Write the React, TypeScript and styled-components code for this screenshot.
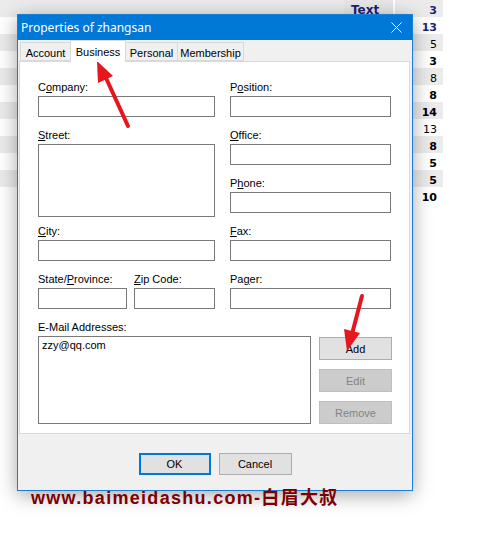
import React from "react";
import styled, { createGlobalStyle } from "styled-components";

const Global = createGlobalStyle`
  html, body { margin: 0; padding: 0; background: #ffffff; }
  body { font-family: "Liberation Sans", Arial, sans-serif; }
  * { box-sizing: border-box; }
`;

const Stage = styled.div`
  position: relative;
  width: 477px;
  height: 535px;
  overflow: hidden;
  background: #ffffff;
`;

/* ---------- background table ---------- */
const Table = styled.div`
  display: flex;
  flex-direction: column;
  width: 443px;
`;

const Row = styled.div<{ $shade: boolean }>`
  display: flex;
  height: 17px;
  background: ${(p) => (p.$shade ? "#ebebeb" : "#ffffff")};
`;

const Lead = styled.div`
  flex: 1;
`;

const TextCell = styled.div<{ $head?: boolean }>`
  width: 49px;
  padding: 3px 0 0 7px;
  font-family: "DejaVu Sans", Verdana, sans-serif;
  font-weight: bold;
  font-size: 12px;
  line-height: 14px;
  color: #1f1f7a;
  background: ${(p) => (p.$head ? "#e6e6e6" : "transparent")};
`;

const Sep = styled.div`
  width: 2px;
  background: #ffffff;
`;

const NumCell = styled.div<{ $bold: boolean; $navy: boolean }>`
  width: 48px;
  padding: 4px 6px 0 0;
  text-align: right;
  font-family: "DejaVu Sans", Verdana, sans-serif;
  font-size: 11px;
  line-height: 13px;
  font-weight: ${(p) => (p.$bold ? "bold" : "normal")};
  color: ${(p) => (p.$navy ? "#1f1f7a" : "#000000")};
`;

/* ---------- dialog ---------- */
const Dialog = styled.div`
  position: absolute;
  left: 17px;
  top: 14px;
  width: 396px;
  height: 477px;
  display: flex;
  flex-direction: column;
  border: 1px solid #1a7fd4;
  background: #f0f0f0;
  box-shadow: 0 4px 18px rgba(0, 0, 0, 0.35);
`;

const TitleBar = styled.div`
  height: 25px;
  flex: none;
  display: flex;
  align-items: center;
  justify-content: space-between;
  padding: 0 10px 1px 3px;
  background: #0078d7;
  color: #ffffff;
  font-family: "Noto Sans", "Liberation Sans", sans-serif;
  font-size: 12px;
`;

const CloseIcon = styled.svg`
  display: block;
`;

const TabStrip = styled.div`
  height: 21px;
  flex: none;
  display: flex;
  align-items: flex-end;
  padding-left: 2px;
  position: relative;
  z-index: 1;
`;

const Tab = styled.div<{ $active?: boolean; $w: number }>`
  width: ${(p) => p.$w}px;
  height: ${(p) => (p.$active ? 22 : 19)}px;
  margin-bottom: ${(p) => (p.$active ? -1 : 0)}px;
  display: flex;
  align-items: center;
  justify-content: center;
  padding-top: ${(p) => (p.$active ? 0 : 2)}px;
  border: 1px solid #d9d9d9;
  border-bottom: ${(p) => (p.$active ? "none" : "1px solid #d9d9d9")};
  margin-right: -1px;
  background: ${(p) => (p.$active ? "#ffffff" : "#f0f0f0")};
  font-size: 11px;
  color: #000;
  position: relative;
  z-index: ${(p) => (p.$active ? 2 : 1)};
`;

const Panel = styled.div`
  height: 373px;
  flex: none;
  margin: 0 2px 0 1px;
  border: 1px solid #d9d9d9;
  background: #ffffff;
  padding: 17px 0 0 18px;
  display: flex;
  flex-direction: column;
  gap: 10px;
`;

const FormGrid = styled.div`
  display: grid;
  grid-template-columns: 177px 161px;
  grid-template-rows: repeat(5, 38px);
  column-gap: 15px;
  row-gap: 10px;
`;

const Field = styled.div<{ $col?: number; $row?: string }>`
  display: flex;
  flex-direction: column;
  align-self: start;
  grid-column: ${(p) => p.$col ?? "auto"};
  grid-row: ${(p) => p.$row ?? "auto"};
`;

const Label = styled.div`
  height: 16px;
  margin-bottom: 1px;
  font-size: 11px;
  line-height: 16px;
  color: #000;
  white-space: nowrap;
`;

const U = styled.span`
  text-decoration: underline;
`;

const TextBox = styled.input<{ $w?: number }>`
  display: block;
  width: ${(p) => (p.$w ? `${p.$w}px` : "100%")};
  height: 21px;
  margin: 0;
  padding: 0 3px;
  border: 1px solid #7a7a7a;
  background: #fff;
  font-family: "Liberation Sans", Arial, sans-serif;
  font-size: 11px;
  outline: none;
`;

const TextArea = styled.textarea`
  display: block;
  width: 100%;
  height: 73px;
  margin: 0;
  padding: 2px 3px;
  border: 1px solid #7a7a7a;
  resize: none;
  background: #fff;
  outline: none;
`;

const Pair = styled.div`
  display: flex;
  gap: 7px;
  grid-column: 1;
  grid-row: 5;
`;

const EmailRow = styled.div`
  display: flex;
  gap: 8px;
`;

const ListBox = styled.div`
  width: 273px;
  height: 88px;
  border: 1px solid #7a7a7a;
  padding: 2px 3px;
  font-size: 11px;
  line-height: 13px;
  color: #000;
`;

const SideButtons = styled.div`
  display: flex;
  flex-direction: column;
  gap: 9px;
  margin-top: 18px;
`;

const Button = styled.button<{ $disabled?: boolean; $default?: boolean; $w?: number; $h?: number }>`
  width: ${(p) => p.$w ?? 73}px;
  height: ${(p) => p.$h ?? 23}px;
  margin: 0;
  padding: 0;
  font-family: "Liberation Sans", Arial, sans-serif;
  font-size: 11px;
  color: ${(p) => (p.$disabled ? "#838383" : "#000000")};
  background: ${(p) => (p.$disabled ? "#cccccc" : "#e1e1e1")};
  border: ${(p) =>
    p.$default ? "2px solid #0078d7" : p.$disabled ? "1px solid #bfbfbf" : "1px solid #adadad"};
  border-radius: 0;
  outline: none;
`;

const Footer = styled.div`
  flex: 1;
  display: flex;
  justify-content: center;
  align-items: flex-start;
  gap: 8px;
  padding-top: 19px;
`;

/* ---------- overlays ---------- */
const Watermark = styled.div`
  position: absolute;
  left: 31px;
  top: 488px;
  font-family: "Liberation Sans", "Noto Sans CJK SC", sans-serif;
  font-weight: bold;
  font-size: 18px;
  letter-spacing: 1.3px;
  line-height: 20px;
  color: #7d0000;
  white-space: nowrap;
`;

const Overlay = styled.svg`
  position: absolute;
  left: 0;
  top: 0;
  pointer-events: none;
`;

const nums = [
  { v: "3", b: true, n: true },
  { v: "13", b: true, n: true },
  { v: "5", b: false, n: false },
  { v: "3", b: true, n: false },
  { v: "8", b: false, n: false },
  { v: "8", b: true, n: false },
  { v: "14", b: true, n: false },
  { v: "13", b: false, n: false },
  { v: "8", b: true, n: false },
  { v: "5", b: true, n: false },
  { v: "5", b: true, n: false },
  { v: "10", b: true, n: false },
];

const tabs = [
  { t: "Account", w: 51 },
  { t: "Business", w: 56, a: true },
  { t: "Personal", w: 53 },
  { t: "Membership", w: 67 },
];

export default function App() {
  return (
    <Stage>
      <Global />
      <Table>
        {nums.map((r, i) => (
          <Row key={i} $shade={i % 2 === 0}>
            <Lead />
            <TextCell $head={i === 0}>{i === 0 ? "Text" : ""}</TextCell>
            <Sep />
            <NumCell $bold={r.b} $navy={r.n}>
              {r.v}
            </NumCell>
          </Row>
        ))}
      </Table>

      <Dialog>
        <TitleBar>
          <span>Properties of zhangsan</span>
          <CloseIcon width="11" height="11" viewBox="0 0 11 11">
            <path d="M0.5 0.5 L10.5 10.5 M10.5 0.5 L0.5 10.5" stroke="#ffffff" strokeWidth="1" />
          </CloseIcon>
        </TitleBar>
        <TabStrip>
          {tabs.map((t) => (
            <Tab key={t.t} $w={t.w} $active={t.a}>
              {t.t}
            </Tab>
          ))}
        </TabStrip>
        <Panel>
          <FormGrid>
            <Field $col={1} $row="1">
              <Label>
                C<U>o</U>mpany:
              </Label>
              <TextBox readOnly />
            </Field>
            <Field $col={2} $row="1">
              <Label>
                P<U>o</U>sition:
              </Label>
              <TextBox readOnly />
            </Field>
            <Field $col={1} $row="2 / span 2">
              <Label>
                <U>S</U>treet:
              </Label>
              <TextArea readOnly />
            </Field>
            <Field $col={2} $row="2">
              <Label>
                <U>O</U>ffice:
              </Label>
              <TextBox readOnly />
            </Field>
            <Field $col={2} $row="3">
              <Label>
                P<U>h</U>one:
              </Label>
              <TextBox readOnly />
            </Field>
            <Field $col={1} $row="4">
              <Label>
                <U>C</U>ity:
              </Label>
              <TextBox readOnly />
            </Field>
            <Field $col={2} $row="4">
              <Label>
                <U>F</U>ax:
              </Label>
              <TextBox readOnly />
            </Field>
            <Pair>
              <Field>
                <Label>
                  State/<U>P</U>rovince:
                </Label>
                <TextBox readOnly $w={89} />
              </Field>
              <Field>
                <Label>
                  <U>Z</U>ip Code:
                </Label>
                <TextBox readOnly $w={81} />
              </Field>
            </Pair>
            <Field $col={2} $row="5">
              <Label>
                Pa<U>g</U>er:
              </Label>
              <TextBox readOnly />
            </Field>
          </FormGrid>
          <EmailRow>
            <Field>
              <Label>E-Mail Addresses:</Label>
              <ListBox>zzy@qq.com</ListBox>
            </Field>
            <SideButtons>
              <Button>Add</Button>
              <Button $disabled>Edit</Button>
              <Button $disabled>Remove</Button>
            </SideButtons>
          </EmailRow>
        </Panel>
        <Footer>
          <Button $default $w={72} $h={22}>
            OK
          </Button>
          <Button $w={73} $h={22}>
            Cancel
          </Button>
        </Footer>
      </Dialog>

      <Watermark>www.baimeidashu.com-白眉大叔</Watermark>

      <Overlay width="477" height="535" viewBox="0 0 477 535">
        <line x1="128" y1="126" x2="106" y2="78" stroke="#e5161e" strokeWidth="4" strokeLinecap="round" />
        <polygon points="97,61 113,76 98,83" fill="#e5161e" />
        <line x1="362" y1="296" x2="352" y2="334" stroke="#e5161e" strokeWidth="4" strokeLinecap="round" />
        <polygon points="347,351 360,333 344,329" fill="#e5161e" />
      </Overlay>
    </Stage>
  );
}
